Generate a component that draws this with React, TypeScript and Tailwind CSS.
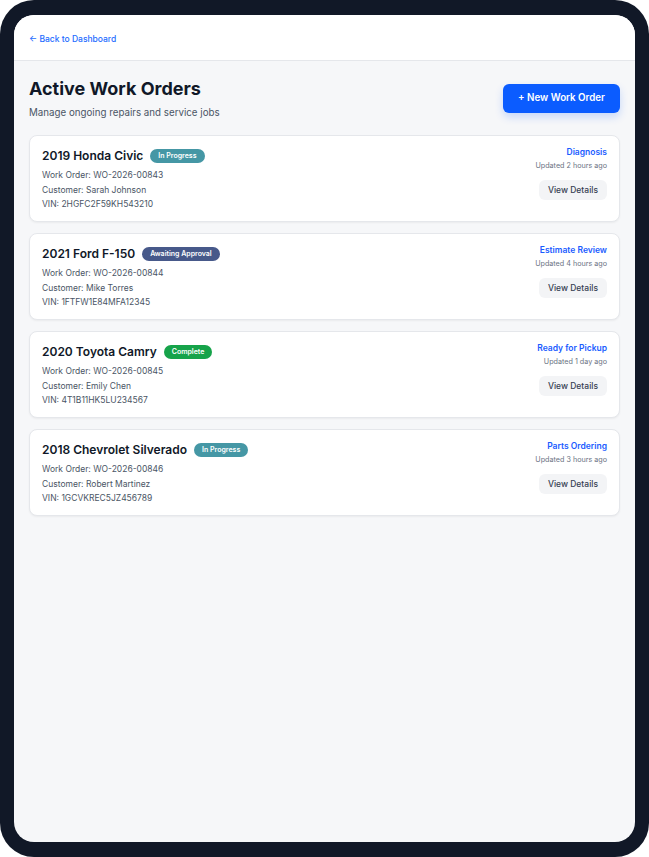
type Order = {
  vehicle: string
  status: string
  badgeClass: string
  number: string
  customer: string
  vin: string
  stage: string
  updated: string
}

const ORDERS: Order[] = [
  {
    vehicle: '2019 Honda Civic',
    status: 'In Progress',
    badgeClass: 'bg-[#4597a5]',
    number: 'WO-2026-00843',
    customer: 'Sarah Johnson',
    vin: '2HGFC2F59KH543210',
    stage: 'Diagnosis',
    updated: 'Updated 2 hours ago',
  },
  {
    vehicle: '2021 Ford F-150',
    status: 'Awaiting Approval',
    badgeClass: 'bg-[#47598a]',
    number: 'WO-2026-00844',
    customer: 'Mike Torres',
    vin: '1FTFW1E84MFA12345',
    stage: 'Estimate Review',
    updated: 'Updated 4 hours ago',
  },
  {
    vehicle: '2020 Toyota Camry',
    status: 'Complete',
    badgeClass: 'bg-[#16a34a]',
    number: 'WO-2026-00845',
    customer: 'Emily Chen',
    vin: '4T1B11HK5LU234567',
    stage: 'Ready for Pickup',
    updated: 'Updated 1 day ago',
  },
  {
    vehicle: '2018 Chevrolet Silverado',
    status: 'In Progress',
    badgeClass: 'bg-[#4597a5]',
    number: 'WO-2026-00846',
    customer: 'Robert Martinez',
    vin: '1GCVKREC5JZ456789',
    stage: 'Parts Ordering',
    updated: 'Updated 3 hours ago',
  },
]

function OrderCard({ order }: { order: Order }) {
  return (
    <div className="flex h-[87px] justify-between rounded-lg border border-gray-200 bg-white px-3 pt-[10px] shadow-[0_1px_2px_rgba(0,0,0,0.05)]">
      <div>
        <div className="flex items-center gap-[7px]">
          <h2 className="text-[12px] font-semibold leading-[19px] text-gray-900">
            {order.vehicle}
          </h2>
          <span
            className={`rounded-full px-[8px] text-[7px] font-semibold leading-[14px] text-white ${order.badgeClass}`}
          >
            {order.status}
          </span>
        </div>
        <div className="mt-[3px] text-[8.5px] leading-[14.5px] text-gray-600">
          <p>Work Order: {order.number}</p>
          <p>Customer: {order.customer}</p>
          <p>VIN: {order.vin}</p>
        </div>
      </div>
      <div className="flex flex-col items-end">
        <span className="text-[8.5px] font-semibold leading-[13px] text-[#1a5cff]">
          {order.stage}
        </span>
        <span className="mt-[1px] text-[7.2px] leading-[12px] text-gray-500">
          {order.updated}
        </span>
        <button
          type="button"
          className="mt-[8px] h-[20px] rounded-md bg-gray-100 px-[9px] text-[8.5px] font-medium text-gray-700"
        >
          View Details
        </button>
      </div>
    </div>
  )
}

export default function App() {
  return (
    <div className="h-[857px] w-[649px] bg-white font-['Inter',sans-serif]">
      <div className="flex h-full w-full flex-col rounded-[34px] bg-[#111827] px-[14px] pb-[15px] pt-[15px]">
        {/* screen */}
        <div className="flex flex-1 flex-col overflow-hidden rounded-[20px] bg-[#f6f7f9]">
          <header className="flex h-[46px] items-center border-b border-gray-200 bg-white px-[15px] pt-[3px]">
            <a className="text-[8.5px] font-medium text-[#1d6bff]">← Back to Dashboard</a>
          </header>

          <main className="px-[15px] pt-[16px]">
            <div className="flex items-center justify-between">
              <div>
                <h1 className="text-[18px] font-bold leading-[24px] text-gray-900">
                  Active Work Orders
                </h1>
                <p className="mt-[5px] text-[9.75px] leading-[14px] text-gray-600">
                  Manage ongoing repairs and service jobs
                </p>
              </div>
              <button
                type="button"
                className="h-[29px] rounded-md bg-[#0b5cff] px-[15px] text-[9.75px] font-semibold text-white shadow-[0_4px_8px_rgba(11,92,255,0.2)]"
              >
                + New Work Order
              </button>
            </div>

            <div className="mt-[15px] flex flex-col gap-[11px]">
              {ORDERS.map((o) => (
                <OrderCard key={o.number} order={o} />
              ))}
            </div>
          </main>
        </div>
      </div>
    </div>
  )
}
